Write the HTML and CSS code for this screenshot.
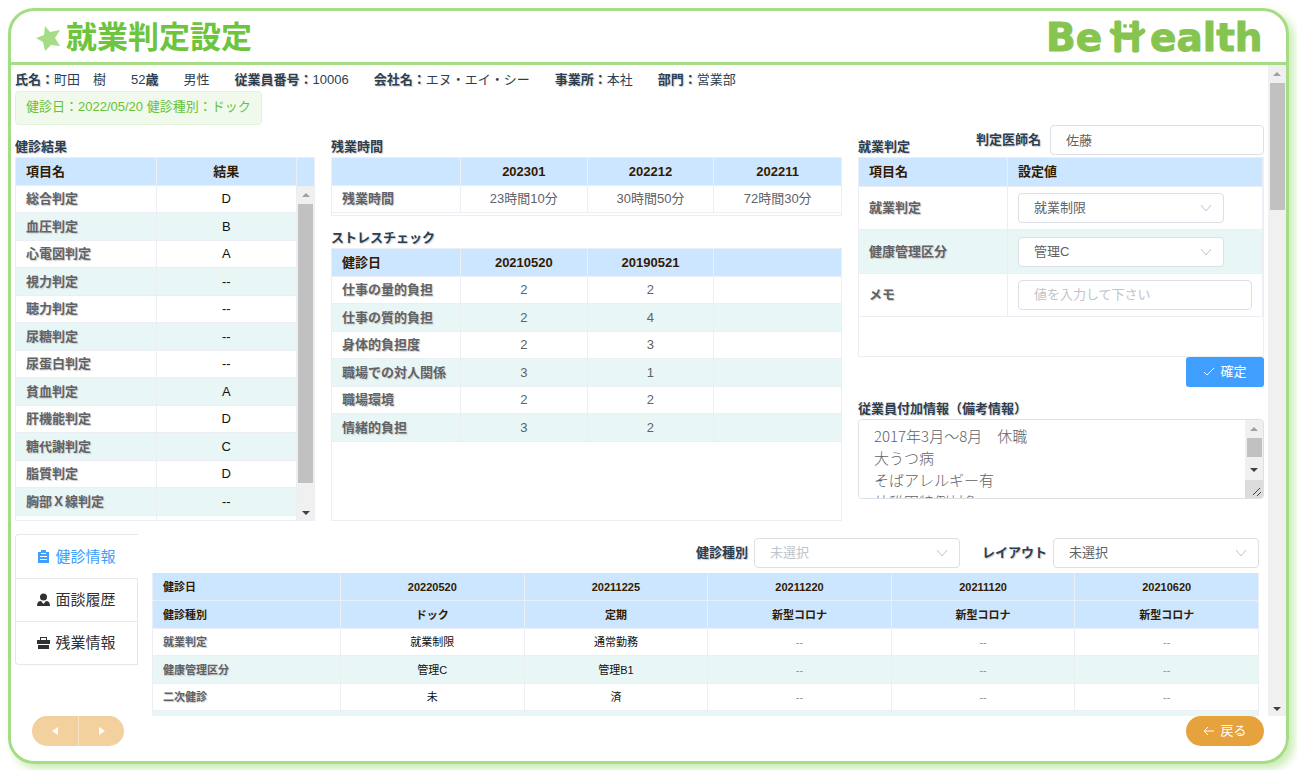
FILE: index.html
```html
<!DOCTYPE html>
<html lang="ja">
<head>
    <meta charset="UTF-8">
    <meta name="viewport" content="width=device-width, initial-scale=1.0">
    <title>就業判定設定 - Be Health</title>
    <link rel="stylesheet" href="styles.css">
</head>
<body>

<div class="frame">
    <header class="header">
        <h1 class="title">
            <svg class="star" width="26" height="26" viewBox="0 0 26 26" aria-hidden="true">
                <path d="M10 1 L15 7 L25 5 L20 13 L25 21 L16 20 L10 26 L8 17 L1 13 L9 10 Z"/>
            </svg>
            就業判定設定
        </h1>
        <svg class="logo" width="220" height="50" viewBox="0 0 220 50" role="img" aria-label="Be Health">
            <text x="0" y="39">Be</text>
            <text x="66" y="39" class="thin">H</text>
            <text x="104" y="39">ealth</text>
            <path class="smile" d="M66 19 Q82 32 97 19"/>
            <circle cx="79" cy="14" r="2"/>
            <circle cx="85" cy="14" r="2"/>
        </svg>
    </header>

    <div class="scroll-area">
        <main class="content">
            <div class="person">
                <span><b>氏名：</b>町田　樹</span>
                <span>52<b>歳</b></span>
                <span>男性</span>
                <span><b>従業員番号：</b>10006</span>
                <span><b>会社名：</b>エヌ・エイ・シー</span>
                <span><b>事業所：</b>本社</span>
                <span><b>部門：</b>営業部</span>
            </div>
            <div class="tag">健診日：2022/05/20 健診種別：ドック</div>

            <div class="columns">
                <section>
                    <div class="section-head"><h2>健診結果</h2></div>
                    <div class="table-box result-box">
                        <table class="result-table">
                            <thead>
                                <tr><th>項目名</th><th>結果</th></tr>
                            </thead>
                            <tbody>
                                <tr><th>総合判定</th><td>D</td></tr>
                                <tr><th>血圧判定</th><td>B</td></tr>
                                <tr><th>心電図判定</th><td>A</td></tr>
                                <tr><th>視力判定</th><td>--</td></tr>
                                <tr><th>聴力判定</th><td>--</td></tr>
                                <tr><th>尿糖判定</th><td>--</td></tr>
                                <tr><th>尿蛋白判定</th><td>--</td></tr>
                                <tr><th>貧血判定</th><td>A</td></tr>
                                <tr><th>肝機能判定</th><td>D</td></tr>
                                <tr><th>糖代謝判定</th><td>C</td></tr>
                                <tr><th>脂質判定</th><td>D</td></tr>
                                <tr><th>胸部Ｘ線判定</th><td>--</td></tr>
                                <tr><th></th><td></td></tr>
                            </tbody>
                        </table>
                        <div class="gutter">
                            <div class="gutter-head"></div>
                            <div class="scrollbar">
                                <i class="arrow-up"></i>
                                <div class="thumb result-thumb"></div>
                                <i class="arrow-down"></i>
                            </div>
                        </div>
                    </div>
                </section>

                <section>
                    <div class="section-head"><h2>残業時間</h2></div>
                    <div class="table-box overtime-box">
                        <table class="quarter-table">
                            <thead>
                                <tr><th></th><th>202301</th><th>202212</th><th>202211</th></tr>
                            </thead>
                            <tbody>
                                <tr><th>残業時間</th><td>23時間10分</td><td>30時間50分</td><td>72時間30分</td></tr>
                            </tbody>
                        </table>
                    </div>
                    <div class="section-head"><h2>ストレスチェック</h2></div>
                    <div class="table-box stress-box">
                        <table class="quarter-table">
                            <thead>
                                <tr><th>健診日</th><th>20210520</th><th>20190521</th><th></th></tr>
                            </thead>
                            <tbody>
                                <tr><th>仕事の量的負担</th><td>2</td><td>2</td><td></td></tr>
                                <tr><th>仕事の質的負担</th><td>2</td><td>4</td><td></td></tr>
                                <tr><th>身体的負担度</th><td>2</td><td>3</td><td></td></tr>
                                <tr><th>職場での対人関係</th><td>3</td><td>1</td><td></td></tr>
                                <tr><th>職場環境</th><td>2</td><td>2</td><td></td></tr>
                                <tr><th>情緒的負担</th><td>3</td><td>2</td><td></td></tr>
                            </tbody>
                        </table>
                    </div>
                </section>

                <section>
                    <div class="section-head">
                        <h2>就業判定</h2>
                        <div class="doctor">
                            <label for="doctor">判定医師名</label>
                            <input type="text" id="doctor" class="field" value="佐藤">
                        </div>
                    </div>
                    <div class="table-box judge-box">
                        <table class="judge-table">
                            <thead>
                                <tr><th>項目名</th><th>設定値</th></tr>
                            </thead>
                            <tbody>
                                <tr>
                                    <th><label for="judge">就業判定</label></th>
                                    <td>
                                        <div class="select">
                                            <select id="judge" class="field"><option>就業制限</option></select>
                                            <svg class="chevron" width="12" height="8" viewBox="0 0 12 8"><path d="M1 1 L6 7 L11 1"/></svg>
                                        </div>
                                    </td>
                                </tr>
                                <tr>
                                    <th><label for="health">健康管理区分</label></th>
                                    <td>
                                        <div class="select">
                                            <select id="health" class="field"><option>管理C</option></select>
                                            <svg class="chevron" width="12" height="8" viewBox="0 0 12 8"><path d="M1 1 L6 7 L11 1"/></svg>
                                        </div>
                                    </td>
                                </tr>
                                <tr>
                                    <th><label for="memo">メモ</label></th>
                                    <td><input type="text" id="memo" class="field" placeholder="値を入力して下さい"></td>
                                </tr>
                            </tbody>
                        </table>
                    </div>
                    <div class="confirm">
                        <button type="button" class="btn btn-primary">
                            <svg width="12" height="10" viewBox="0 0 12 10"><path d="M1 5 L4 8 L11 1"/></svg>
                            確定
                        </button>
                    </div>
                    <div class="section-head"><h2><label for="note">従業員付加情報（備考情報）</label></h2></div>
                    <div class="note-box">
                        <textarea id="note" class="note">2017年3月～8月　休職
大うつ病
そばアレルギー有
幼稚園特例対象</textarea>
                        <div class="scrollbar note-scroll">
                            <i class="arrow-up"></i>
                            <div class="thumb note-thumb"></div>
                            <i class="arrow-down"></i>
                            <svg class="grip" width="18" height="18" viewBox="0 0 18 18"><path d="M8 15 L15 8 M12 16 L16 12"/></svg>
                        </div>
                    </div>
                </section>
            </div>

            <div class="lower">
                <nav class="tabs">
                    <button type="button" class="tab active">
                        <svg width="13" height="14" viewBox="0 0 13 14"><path fill-rule="evenodd" d="M4 0 H9 V2 H12 V13 H1 V2 H4 Z M4 3 V4 H9 V3 Z M3 6 V7 H10 V6 Z M3 9 V10 H10 V9 Z"/></svg>
                        健診情報
                    </button>
                    <button type="button" class="tab">
                        <svg width="13" height="14" viewBox="0 0 13 14"><circle cx="6.5" cy="4" r="3.5"/><path d="M0 13 Q0 8 4 8 L6.500 11 L9 8 Q13 8 13 13 Z"/></svg>
                        面談履歴
                    </button>
                    <button type="button" class="tab">
                        <svg width="13" height="14" viewBox="0 0 13 14"><path fill-rule="evenodd" d="M3 4 V1 H10 V4 H13 V8 H0 V4 Z M4 4 H9 V2 H4 Z M1 9 H12 V13 H1 Z"/></svg>
                        残業情報
                    </button>
                </nav>
                <div class="history">
                    <div class="filters">
                        <label for="kind">健診種別</label>
                        <div class="select">
                            <select id="kind" class="field empty"><option>未選択</option></select>
                            <svg class="chevron" width="12" height="8" viewBox="0 0 12 8"><path d="M1 1 L6 7 L11 1"/></svg>
                        </div>
                        <label for="layout" class="layout-label">レイアウト</label>
                        <div class="select">
                            <select id="layout" class="field"><option>未選択</option></select>
                            <svg class="chevron" width="12" height="8" viewBox="0 0 12 8"><path d="M1 1 L6 7 L11 1"/></svg>
                        </div>
                    </div>
                    <table class="history-table">
                        <thead>
                            <tr><th>健診日</th><th>20220520</th><th>20211225</th><th>20211220</th><th>20211120</th><th>20210620</th></tr>
                            <tr><th>健診種別</th><th>ドック</th><th>定期</th><th>新型コロナ</th><th>新型コロナ</th><th>新型コロナ</th></tr>
                        </thead>
                        <tbody>
                            <tr><th>就業判定</th><td>就業制限</td><td>通常勤務</td><td class="none">--</td><td class="none">--</td><td class="none">--</td></tr>
                            <tr><th>健康管理区分</th><td>管理C</td><td>管理B1</td><td class="none">--</td><td class="none">--</td><td class="none">--</td></tr>
                            <tr><th>二次健診</th><td>未</td><td>済</td><td class="none">--</td><td class="none">--</td><td class="none">--</td></tr>
                            <tr><th></th><td></td><td></td><td></td><td></td><td></td></tr>
                        </tbody>
                    </table>
                </div>
            </div>
        </main>
        <div class="scrollbar">
            <i class="arrow-up"></i>
            <div class="thumb page-thumb"></div>
            <i class="arrow-down"></i>
        </div>
    </div>

    <footer class="footer">
        <div class="pager">
            <button type="button" aria-label="前へ" disabled><svg width="6" height="8" viewBox="0 0 6 8"><path d="M6 0 V8 L0 4 Z"/></svg></button>
            <button type="button" aria-label="次へ" disabled><svg width="6" height="8" viewBox="0 0 6 8"><path d="M0 0 V8 L6 4 Z"/></svg></button>
        </div>
        <button type="button" class="btn btn-back">
            <svg width="12" height="10" viewBox="0 0 12 10"><path d="M11 5 H1 M5 1 L1 5 L5 9"/></svg>
            戻る
        </button>
    </footer>
</div>

</body>
</html>
```

FILE: styles.css
```css
* {
    box-sizing: border-box;
}
body {
    margin: 0;
    padding: 8px 8px 6px;
    height: 100vh;
    overflow: hidden;
    font-family: "Liberation Sans", "Noto Sans CJK JP", sans-serif;
    font-size: 13px;
    line-height: 20px;
    color: #2c3e50;
}
button, input, select, textarea {
    font-family: inherit;
    font-size: 13px;
    line-height: 20px;
    margin: 0;
}
h1, h2 {
    margin: 0;
}

/* frame */
.frame {
    display: flex;
    flex-direction: column;
    height: 100%;
    border: 3px solid #a6dc86;
    border-radius: 26px;
    box-shadow: 5px 5px 10px #c8ecb4;
    overflow: hidden;
}
.header {
    display: flex;
    justify-content: space-between;
    align-items: center;
    height: 54px;
    padding: 0 20px 0 24px;
    border-bottom: 3px solid #a6dc86;
    flex-shrink: 0;
}
.title {
    display: flex;
    align-items: center;
    gap: 5px;
    padding-top: 2px;
    font-size: 31px;
    line-height: 40px;
    color: #6cc53c;
}
.star {
    fill: #a6dc86;
}
.logo {
    fill: #86c450;
    font-family: "DejaVu Sans", sans-serif;
    font-size: 39px;
    font-weight: bold;
}
.logo text {
    stroke: #86c450;
    stroke-width: 1;
    stroke-linejoin: round;
}
.logo .thin {
    font-weight: normal;
    stroke-width: 3;
}
.smile {
    fill: none;
    stroke: #86c450;
    stroke-width: 5;
    stroke-linecap: round;
}
.scroll-area {
    display: flex;
    flex: 1;
    min-height: 0;
}
.content {
    flex: 1;
    padding: 5px 4px 0;
    overflow: hidden;
}

/* scrollbars */
.scrollbar {
    display: flex;
    flex-direction: column;
    align-items: center;
    width: 18px;
    background-color: #f0f0f0;
    flex-shrink: 0;
}
.arrow-up, .arrow-down {
    border: 4px solid transparent;
}
.arrow-up {
    margin: 3px 0 7px;
    border-bottom-color: #a0a0a0;
}
.arrow-down {
    margin: auto 0 1px;
    border-top-color: #404040;
}
.thumb {
    width: 15px;
    background-color: #c1c1c1;
}
.page-thumb {
    height: 127px;
}
.result-thumb {
    height: 279px;
}
.note-thumb {
    height: 19px;
}

/* person */
.person {
    display: flex;
    gap: 25px;
    height: 21px;
}
.person b, h2, .doctor label, .filters label, tbody th {
    text-shadow: 1px 1px 1px #ccc;
}
.tag {
    width: fit-content;
    height: 34px;
    padding: 0 10px;
    line-height: 30px;
    color: #67c23a;
    background-color: #f0f9eb;
    border: 1px solid #e1f3d8;
    border-radius: 4px;
}

/* upper columns */
.columns {
    display: grid;
    grid-template-columns: 300fr 511fr 406fr;
    gap: 16px;
}
.section-head {
    display: flex;
    justify-content: space-between;
    align-items: flex-end;
    height: 32px;
}
h2 {
    font-size: 13px;
    line-height: 20px;
}
.doctor {
    display: flex;
    align-items: center;
    gap: 9px;
    padding-bottom: 2px;
    font-weight: bold;
}
.doctor .field {
    width: 214px;
}

/* tables */
table {
    width: 100%;
    border-collapse: separate;
    border-spacing: 0;
    table-layout: fixed;
}
th, td {
    height: 27px;
    padding: 0 10px;
    border-right: 1px solid #ebeef5;
    border-bottom: 1px solid #ebeef5;
    line-height: 20px;
    text-align: center;
    white-space: nowrap;
}
td {
    color: #606266;
}
th:first-child {
    text-align: left;
}
thead th {
    height: 28px;
    color: #331a00;
    background-color: #cce6ff;
}
tbody th {
    color: #606266;
}
tbody tr:nth-child(even) > * {
    height: 28px;
    background-color: #e9f6f6;
}
.table-box {
    border: 1px solid #ebeef5;
    overflow: hidden;
}
.result-box {
    display: flex;
    height: 364px;
}
.result-table {
    flex: 1;
    align-self: flex-start;
}
.result-table td {
    color: #111;
}
.gutter {
    display: flex;
    flex-direction: column;
    width: 17px;
}
.gutter-head {
    height: 28px;
    background-color: #cce6ff;
}
.gutter .scrollbar {
    flex: 1;
    width: 17px;
}
.overtime-box {
    height: 59px;
}
.stress-box {
    height: 273px;
}
.quarter-table th:first-child {
    width: 129px;
}
.quarter-table th:last-child, .quarter-table td:last-child {
    border-right: 0;
}
.judge-box {
    height: 200px;
}
.judge-table th {
    text-align: left;
}
.judge-table thead th {
    height: 29px;
}
.judge-table th:first-child {
    width: 149px;
}
.judge-table td {
    text-align: left;
}
.judge-table tbody th, .judge-table tbody td {
    height: 43px;
}
.judge-table tbody tr:nth-child(even) > * {
    height: 44px;
}

/* form controls */
.field {
    display: block;
    width: 100%;
    height: 30px;
    padding: 0 15px;
    color: #606266;
    background-color: white;
    border: 1px solid #dcdfe6;
    border-radius: 4px;
    outline: none;
    appearance: none;
}
input.field {
    padding-bottom: 2px;
}
.field::placeholder, .empty {
    color: #c0c4cc;
}
.select {
    position: relative;
    width: 206px;
}
.chevron {
    position: absolute;
    top: 11px;
    right: 12px;
    fill: none;
    stroke: #c0c4cc;
    pointer-events: none;
}
.btn {
    display: flex;
    align-items: center;
    justify-content: center;
    gap: 5px;
    width: 78px;
    height: 30px;
    padding: 0;
    border: 0;
    color: white;
    cursor: pointer;
}
.btn svg {
    fill: none;
    stroke: white;
}
.btn-primary {
    background-color: #409eff;
    border-radius: 3px;
}
.btn-back {
    background-color: #e6a23c;
    border-radius: 15px;
}
.confirm {
    display: flex;
    justify-content: flex-end;
}
.note-box {
    display: flex;
    height: 80px;
    border: 1px solid #dcdfe6;
    border-radius: 4px;
    overflow: hidden;
}
.note {
    flex: 1;
    padding: 5px 15px 0;
    border: 0;
    outline: none;
    resize: none;
    overflow: hidden;
    font-family: "Noto Sans CJK JP", sans-serif;
    font-size: 15px;
    font-weight: 300;
    line-height: 22px;
    color: #606266;
}
.grip {
    background-color: #dcdcdc;
    stroke: #404040;
}
.note-scroll .arrow-down {
    margin-bottom: 4px;
}

/* tabs and history */
.lower {
    display: flex;
    gap: 14px;
    margin-top: 13px;
}
.tabs {
    display: flex;
    flex-direction: column;
    align-self: flex-start;
    width: 123px;
    border: 1px solid #e4e7ed;
    border-right: 0;
    border-radius: 4px 0 0 4px;
}
.tab {
    display: flex;
    align-items: center;
    justify-content: center;
    gap: 5px;
    height: 43px;
    padding: 0;
    font-size: 15px;
    color: #303133;
    fill: #303133;
    background: none;
    border: 0;
    border-right: 1px solid #e4e7ed;
    cursor: pointer;
}
.tab + .tab {
    border-top: 1px solid #e4e7ed;
}
.tab.active {
    color: #409eff;
    fill: #409eff;
    border-right-color: transparent;
}
.history {
    flex: 1;
    padding: 4px 5px 0 0;
}
.filters {
    display: flex;
    align-items: center;
    justify-content: flex-end;
    gap: 6px;
    height: 30px;
    margin-bottom: 5px;
    font-weight: bold;
}
.layout-label {
    padding-left: 16px;
}
.history-table {
    font-size: 11px;
    border-left: 1px solid #ebeef5;
}
.history-table th:first-child {
    width: 188px;
}
.history-table td {
    color: #111;
}
.history-table .none {
    color: #909399;
}

/* footer */
.footer {
    display: flex;
    justify-content: space-between;
    height: 45px;
    padding: 0 22px 0 21px;
    flex-shrink: 0;
}
.pager {
    display: flex;
    height: 30px;
    border-radius: 15px;
    overflow: hidden;
}
.pager button {
    width: 46px;
    padding: 0;
    background-color: #f3d19e;
    border: 0;
    fill: white;
}
.pager button + button {
    border-left: 1px solid #f8e3c5;
}
```
